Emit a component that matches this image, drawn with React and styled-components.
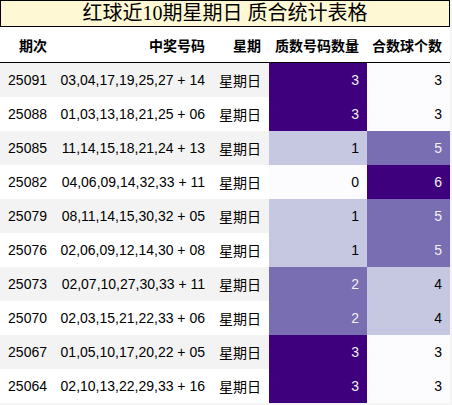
import React from 'react'
import styled, { createGlobalStyle } from 'styled-components'

const GlobalStyle = createGlobalStyle`
    html, body {
        margin: 0;
        padding: 0;
        background: #f4f4f4;
    }
`

const Wrapper = styled.div`
    width: 450px;
    background: #ffffff;
    font-family: "Liberation Sans", "Noto Sans CJK SC", sans-serif;
    color: #000;
`

const Title = styled.div`
    height: 25px;
    line-height: 25px;
    border: 1px solid #000;
    background: #fff8d4;
    text-align: center;
    font-family: "Liberation Serif", "Noto Sans CJK SC", serif;
    font-size: 20px;
`

const Table = styled.table`
    width: 450px;
    border-collapse: collapse;
    border-spacing: 0;
    table-layout: fixed;
    font-size: 14px;
`

const HeadCell = styled.th`
    height: 35px;
    padding: 0 8px 0 0;
    text-align: right;
    font-weight: bold;
    font-size: 14px;
    border-bottom: 1px solid #000;
    white-space: nowrap;
`

const Row = styled.tr`
    background: ${p => (p.$striped ? '#f3f3f3' : '#ffffff')};
`

const Cell = styled.td`
    height: 34px;
    padding: 0 8px 0 0;
    text-align: right;
    white-space: nowrap;
    background: ${p => p.$bg || 'transparent'};
    color: ${p => p.$fg || '#000'};
`

// Purples colormap steps for 0, 1/3, 2/3, 1
const shades = [
    { bg: '#fcfbfd', fg: '#000000' },
    { bg: '#c6c7e1', fg: '#000000' },
    { bg: '#796eb2', fg: '#f1f1f1' },
    { bg: '#3f007d', fg: '#f1f1f1' },
]

const rows = [
    ['25091', '03,04,17,19,25,27 + 14', 3, 3],
    ['25088', '01,03,13,18,21,25 + 06', 3, 3],
    ['25085', '11,14,15,18,21,24 + 13', 1, 5],
    ['25082', '04,06,09,14,32,33 + 11', 0, 6],
    ['25079', '08,11,14,15,30,32 + 05', 1, 5],
    ['25076', '02,06,09,12,14,30 + 08', 1, 5],
    ['25073', '02,07,10,27,30,33 + 11', 2, 4],
    ['25070', '02,03,15,21,22,33 + 06', 2, 4],
    ['25067', '01,05,10,17,20,22 + 05', 3, 3],
    ['25064', '02,10,13,22,29,33 + 16', 3, 3],
]

export default function App() {
    return (
        <Wrapper>
            <GlobalStyle />
            <Title>红球近10期星期日 质合统计表格</Title>
            <Table>
                <colgroup>
                    <col style={{ width: 55 }} />
                    <col style={{ width: 158 }} />
                    <col style={{ width: 56 }} />
                    <col style={{ width: 98 }} />
                    <col style={{ width: 83 }} />
                </colgroup>
                <thead>
                    <tr>
                        <HeadCell>期次</HeadCell>
                        <HeadCell>中奖号码</HeadCell>
                        <HeadCell>星期</HeadCell>
                        <HeadCell>质数号码数量</HeadCell>
                        <HeadCell>合数球个数</HeadCell>
                    </tr>
                </thead>
                <tbody>
                    {rows.map((r, i) => {
                        const prime = shades[r[2]]
                        const comp = shades[r[3] - 3]
                        return (
                            <Row key={r[0]} $striped={i % 2 === 0}>
                                <Cell>{r[0]}</Cell>
                                <Cell>{r[1]}</Cell>
                                <Cell>星期日</Cell>
                                <Cell $bg={prime.bg} $fg={prime.fg}>{r[2]}</Cell>
                                <Cell $bg={comp.bg} $fg={comp.fg}>{r[3]}</Cell>
                            </Row>
                        )
                    })}
                </tbody>
            </Table>
        </Wrapper>
    )
}
